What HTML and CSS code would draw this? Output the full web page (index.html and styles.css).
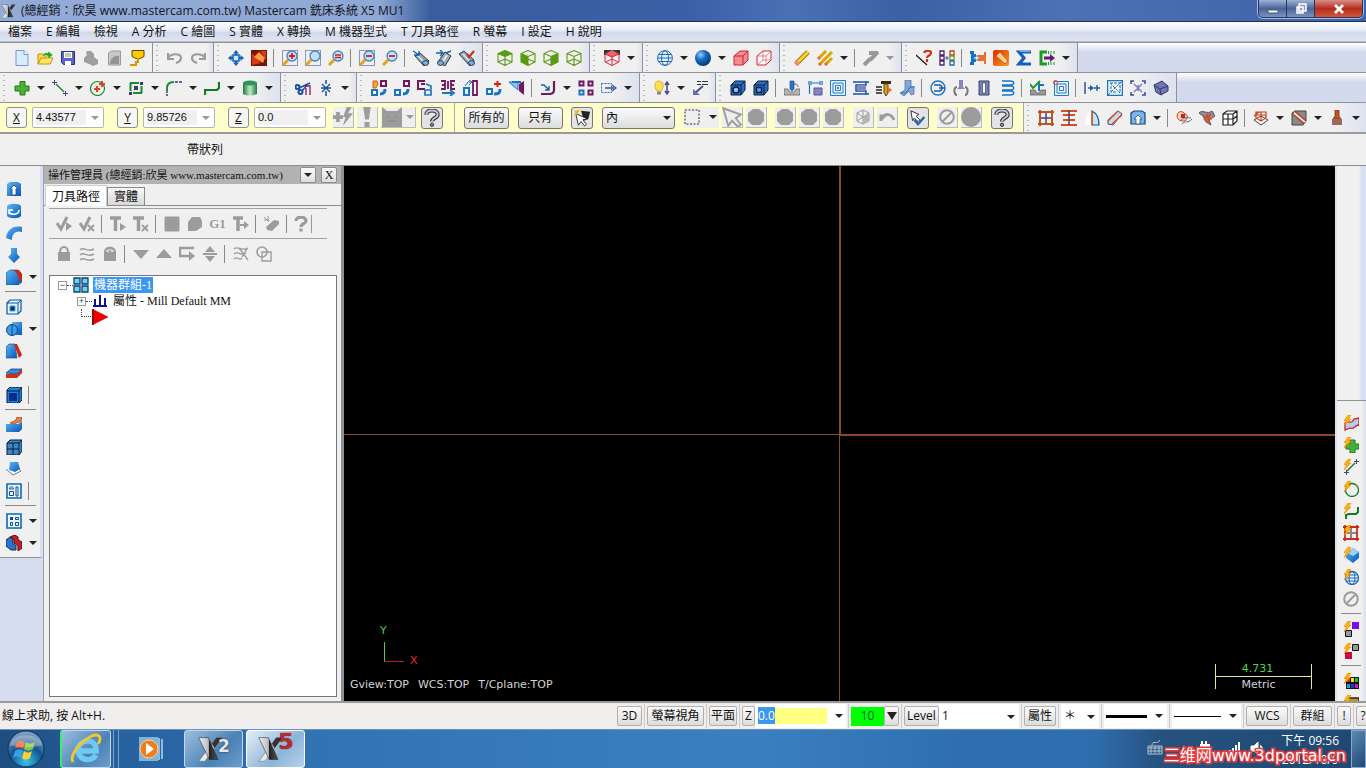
FILE: index.html
```html
<!DOCTYPE html>
<html lang="zh-Hant">
<head>
<meta charset="utf-8">
<title>Mastercam 銑床系統 X5 MU1</title>
<link rel="stylesheet" href="styles.css">
</head>
<body>
<svg class="sprite" aria-hidden="true">
<defs>
<linearGradient id="gBlue" x1="0" y1="0" x2="1" y2="1"><stop offset="0" stop-color="#5db8f5"/><stop offset="1" stop-color="#0755b8"/></linearGradient>
<linearGradient id="gGreen" x1="0" x2="1"><stop offset="0" stop-color="#1d7a3c"/><stop offset=".5" stop-color="#c2e8cb"/><stop offset="1" stop-color="#1d7a3c"/></linearGradient>
<radialGradient id="gBall" cx=".35" cy=".3" r=".8"><stop offset="0" stop-color="#8fd0ff"/><stop offset=".4" stop-color="#1a6cc0"/><stop offset="1" stop-color="#032f66"/></radialGradient>
<linearGradient id="gFire" x1="0" y1="0" x2="1" y2="1"><stop offset="0" stop-color="#e02a00"/><stop offset="1" stop-color="#ff9a20"/></linearGradient>
<linearGradient id="gSteel" x1="0" y1="0" x2="1" y2="0"><stop offset="0" stop-color="#f4f4f4"/><stop offset=".5" stop-color="#b8bcc2"/><stop offset=".55" stop-color="#222"/><stop offset="1" stop-color="#555"/></linearGradient>
<radialGradient id="gOrb" cx=".5" cy=".85" r=".9"><stop offset="0" stop-color="#37c3ef"/><stop offset=".5" stop-color="#14548f"/><stop offset="1" stop-color="#9db9d4"/></radialGradient>
<path id="bolt" d="M5 0h3L5.500 4H8L1 11l2.500-5.500H1z" fill="#ffb400" stroke="#e87a00" stroke-width=".5"/>
<g id="lens"><path d="M1 15l5-5" stroke="#e8a016" stroke-width="3"/><circle cx="10" cy="6" r="5" fill="#bfe2fb" stroke="#4a7fb5" stroke-width="1.300"/></g>
<path id="marq" d="M.5.5h15v15H.5z" stroke="#223a8c" stroke-dasharray="1 1"/>
<g id="cubeLines" stroke="#5b9a12" stroke-width="1.100"><path d="M8 .5l7 3v8.500l-7 3.500L1 12V3.500zM1 3.500L8 6.500l7-3M8 6.500v9M1 12l7-3 7 3"/></g>
<path id="disc" d="M5 0h6l5 4v8l-4 4H4l-4-4V4z" fill="#9c9c9c"/>
</defs>
<symbol id="new" viewBox="0 0 16 16"><path d="M2 .5h8l4 4v11H2z" fill="#d7ecff" stroke="#6f9bd0"/><path d="M10 .5v4h4" fill="#fff" stroke="#6f9bd0"/></symbol>
<symbol id="open" viewBox="0 0 16 16"><path d="M1 14V4h5l1 2h6v3" fill="#ffd84a" stroke="#c49000"/><path d="M1 14l3-6h12l-3 6z" fill="#ffe768" stroke="#c49000"/><path d="M5 7c1-4 4-5 6-4V1l5 4-5 4V6C8 5 7 6 5 7z" fill="#28a428" stroke="#fff" stroke-width=".4"/></symbol>
<symbol id="save" viewBox="0 0 16 16"><path d="M1.500 1.500h13v13h-11l-2-2z" fill="#5a64c8" stroke="#2a2f7c"/><path d="M4 2h8v6H4zM5 11h6v4H5z" fill="#fff"/><path d="M5 4h6M5 6h6" stroke="#888"/></symbol>
<symbol id="print" viewBox="0 0 16 16"><path d="M4 1h4l3 3v3l4 3v4l-5 2-4-2-5-2v-4l3-3-1-2z" fill="#9f9f9f"/></symbol>
<symbol id="prev" viewBox="0 0 16 16"><path d="M2.500 15V3l3-2h9v14z" fill="#c8c8c8" stroke="#9a9a9a"/><path d="M4 14c0-6 5-9 9-8v8z" fill="#949494"/></symbol>
<symbol id="cup" viewBox="0 0 16 16"><path d="M3 .5h12v6l-4 2H7l-4-2z" fill="#ffc800" stroke="#5a4a00"/><path d="M9 8v4H7v3H1" stroke="#d59a00" stroke-width="2"/></symbol>
<symbol id="undo" viewBox="0 0 16 16"><path d="M1 3v6h6M1 8c3-5 13-5 13 0 0 3-2 4-5 5" stroke="#9b9b9b" stroke-width="2.200"/></symbol>
<symbol id="redo" viewBox="0 0 16 16"><path d="M15 3v6H9M15 8C12 3 2 3 2 8c0 3 2 4 5 5" stroke="#9b9b9b" stroke-width="2.200"/></symbol>
<symbol id="fit" viewBox="0 0 16 16"><path d="M8 0l3 3.500H5zM8 16l3-3.500H5zM0 8l3.500 3V5zM16 8l-3.500 3V5z" fill="#1560b8"/><path d="M5 5h6v6H5z" fill="#cfe6fb" stroke="#1560b8" stroke-width="1.500"/><path d="M8 3v2M8 11v2M3 8h2M11 8h2" stroke="#1560b8" stroke-width="2"/></symbol>
<symbol id="repaint" viewBox="0 0 16 16"><path d="M0 0h16v16H0z" fill="#7a1405"/><path d="M1 15V3l9 10zM9 1h6v8z" fill="#d93a12"/><path d="M3 7l5-5 6 6-2 5z" fill="#ff9c45"/></symbol>
<symbol id="zwin" viewBox="0 0 16 16"><use href="#marq"/><use href="#lens"/><path d="M10 3v6M7 6h6" stroke="#d31d1d" stroke-width="1.800"/></symbol>
<symbol id="ztar" viewBox="0 0 16 16"><use href="#marq"/><use href="#lens"/></symbol>
<symbol id="zeq" viewBox="0 0 16 16"><use href="#lens"/><path d="M7 5h6M7 7.500h6" stroke="#d31d1d" stroke-width="1.500"/></symbol>
<symbol id="zoutw" viewBox="0 0 16 16"><use href="#marq"/><use href="#lens"/><path d="M7 6h6" stroke="#d31d1d" stroke-width="1.800"/></symbol>
<symbol id="zout" viewBox="0 0 16 16"><use href="#lens"/><path d="M7 6h6" stroke="#d31d1d" stroke-width="1.800"/></symbol>
<symbol id="scopeA" viewBox="0 0 16 16"><path d="M2 6l5-3 9 8-5 5z" fill="#8fa3b8" stroke="#2c3a48"/><path d="M5 6l7 7" stroke="#dfe8f0" stroke-width="1.500"/><ellipse cx="12.500" cy="13" rx="3" ry="2.400" fill="#7ab0e0" stroke="#2c3a48"/><path d="M0 1l6 4M1 5h5V1" stroke="#1560b8" stroke-width="1.400"/></symbol>
<symbol id="scopeB" viewBox="0 0 16 16"><path d="M9 2l6 4-6 10-7-4z" fill="#9aaab9" stroke="#2c3a48"/><path d="M11 5l-5 8" stroke="#e6edf3" stroke-width="2"/><ellipse cx="4.500" cy="13" rx="3" ry="2.400" fill="#7ab0e0" stroke="#2c3a48"/><path d="M0 3h7M4 0l3 3-3 3M10 3l5-2" stroke="#1560b8" stroke-width="1.400"/></symbol>
<symbol id="scopeC" viewBox="0 0 16 16"><path d="M0 4l5-3 10 9-4 6z" fill="#8fa3b8" stroke="#2c3a48"/><path d="M4 4l7 8" stroke="#dfe8f0" stroke-width="1.500"/><ellipse cx="12.500" cy="13" rx="3" ry="2.400" fill="#7ab0e0" stroke="#2c3a48"/><path d="M8 4l2 3 5-6" stroke="#d02a1a" stroke-width="2"/></symbol>
<symbol id="vTop" viewBox="0 0 16 16"><path d="M1 3.500l7-3 7 3-7 3z" fill="#5b9a12"/><use href="#cubeLines"/></symbol>
<symbol id="vFront" viewBox="0 0 16 16"><path d="M1 3.500l7 3v9L1 12z" fill="#5b9a12"/><use href="#cubeLines"/></symbol>
<symbol id="vRight" viewBox="0 0 16 16"><path d="M15 3.500l-7 3v9l7-3.500z" fill="#5b9a12"/><use href="#cubeLines"/></symbol>
<symbol id="vIso" viewBox="0 0 16 16"><use href="#cubeLines"/></symbol>
<symbol id="vRed" viewBox="0 0 16 16"><path d="M0 0h16v5H0z" fill="#333"/><path d="M1 4l7-4 7 4-7 3z" fill="#f0626a"/><path d="M1 4v8l7 3.500 7-3.500V4L8 7zM8 7v8M2 12l6-3 6 3" stroke="#d3263a"/></symbol>
<symbol id="globe" viewBox="0 0 16 16"><circle cx="8" cy="8" r="7.400" fill="#e8f4ff" stroke="#1d68ad"/><ellipse cx="8" cy="8" rx="3.500" ry="7.200" stroke="#1d68ad"/><path d="M1 8h14M2 4.500h12M2 11.500h12" stroke="#1d68ad"/></symbol>
<symbol id="ball" viewBox="0 0 16 16"><circle cx="8" cy="8" r="8" fill="url(#gBall)"/></symbol>
<symbol id="boxR" viewBox="0 0 16 16"><path d="M1 6l6-5h8v9l-5 5H1z" fill="#f58a92" stroke="#cf2232"/><path d="M1 6h9v9M10 6l5-5" stroke="#cf2232"/></symbol>
<symbol id="boxW" viewBox="0 0 16 16"><path d="M1 6l6-5h8v9l-5 5H1z" fill="#fff" stroke="#cf2232"/><path d="M1 6h9v9M10 6l5-5M7 1v9L1 15M7 10h8" stroke="#e0606a" stroke-width=".8"/></symbol>
<symbol id="eras" viewBox="0 0 16 16"><path d="M2 14L14 2" stroke="#a37a00" stroke-width="5"/><path d="M4 12L14.500 1.500" stroke="#f8cf2c" stroke-width="3"/><path d="M1.500 14.500l3-3" stroke="#ea8c80" stroke-width="4"/></symbol>
<symbol id="eras2" viewBox="0 0 16 16"><path d="M1 9l8-8M2 15L15 2M8 15l7-7" stroke="#d8a800" stroke-width="3"/><path d="M1 9l2-2M2 15l2-2M8 15l2-2" stroke="#ea6c60" stroke-width="3"/></symbol>
<symbol id="undel" viewBox="0 0 16 16"><path d="M1 15l6-6M6 3h9M7 10l8-8" stroke="#999" stroke-width="4"/></symbol>
<symbol id="anq" viewBox="0 0 16 16"><path d="M0 5l11 10" stroke="#222" stroke-width="1.400"/><path d="M8 3c1-3 7-3 7 0 0 3-4 2-4 5M11 9v3" stroke="#cf3212" stroke-width="2.200"/></symbol>
<symbol id="chain" viewBox="0 0 16 16"><path d="M1 1h4v4H1zM1 6h4v4H1zM1 11h4v4H1z" fill="#fff" stroke="#54206e" stroke-width="1.300"/><path d="M11 1h4v4h-4z" fill="#fff" stroke="#c83a1c" stroke-width="1.300"/><path d="M11 6h4v4h-4z" fill="#fff" stroke="#6a9c12" stroke-width="1.300"/><path d="M11 11h4v4h-4z" fill="#fff" stroke="#2368b4" stroke-width="1.300"/><path d="M6 8h4M8 6v4" stroke="#2368b4"/></symbol>
<symbol id="gear" viewBox="0 0 16 16"><path d="M0 1h4v3h2v3H4v2h2v3H4v3H0v-3h1V4H0z" fill="#1570c8"/><circle cx="7" cy="8" r="2" stroke="#4a9ae0"/><path d="M15 2v12M9 6h4v4H9l2-2z" fill="#ef6c2e" stroke="#ef6c2e" stroke-width="2"/></symbol>
<symbol id="brush" viewBox="0 0 16 16"><rect width="16" height="16" rx="2" fill="url(#gFire)"/><path d="M3 6l4-4 8 9-3 3z" fill="#ffd08a" stroke="#a5490a" stroke-width=".7"/></symbol>
<symbol id="sigma" viewBox="0 0 16 16"><path d="M15 2H3l5 6-5 6h12" stroke="#1560b8" stroke-width="3.200"/><path d="M14 1.500H4" stroke="#6eb2ef"/></symbol>
<symbol id="nc" viewBox="0 0 16 16"><path d="M8 2H2v12h6" stroke="#1d9c2a" stroke-width="3"/><path d="M9.500 1v3M12 1v3M15 1v3M9.500 12v3M12 12v3M15 12v3" stroke="#1d9c2a"/><path d="M5 8h7" stroke="#6a1a72" stroke-width="3"/><path d="M11 4l5 4-5 4z" fill="#6a1a72"/></symbol>

<symbol id="plus" viewBox="0 0 16 16"><path d="M6 1.500h5V6h4v5h-4v4H6v-4H1V6h5z" fill="#4fae36" stroke="#1f7a1c"/></symbol>
<symbol id="line" viewBox="0 0 16 16"><path d="M4 4l8 8" stroke="#1b8a2a" stroke-width="1.500"/><path d="M0 2.500h5M2.500 0v5M11 13.500h5M13.500 11v5" stroke="#44447c"/></symbol>
<symbol id="arc" viewBox="0 0 16 16"><circle cx="7.500" cy="8.500" r="7" stroke="#1b8a2a" stroke-width="1.200"/><path d="M4 9h6M7 6v6M9 4h6M12 1v6" stroke="#e0421c" stroke-width="2"/></symbol>
<symbol id="rect" viewBox="0 0 16 16"><path d="M2 3h12M2 13h12M2.500 3v10M13.500 3v10" stroke="#1b8a2a" stroke-width="2"/><path d="M11 1h5v5h-5zM0 11h5v5H0z" fill="#efefef"/><path d="M6 6h4v4H6zM12 2h3v3h-3zM1 12h3v3H1z" fill="#3a3a70"/></symbol>
<symbol id="fillet" viewBox="0 0 16 16"><path d="M1 10V8c0-4 3-6 7-6" stroke="#1b8a2a" stroke-width="2"/><path d="M9 2h7M1 10v6" stroke="#3a3a70" stroke-width="1.500" stroke-dasharray="3 1"/></symbol>
<symbol id="spline" viewBox="0 0 16 16"><path d="M1 15v-5h12l2-2V2" stroke="#137a24" stroke-width="2.200"/></symbol>
<symbol id="cyl" viewBox="0 0 16 16"><path d="M1 3v11c4 2 10 2 14 0V3z" fill="url(#gGreen)"/><ellipse cx="8" cy="3" rx="7" ry="2.400" fill="#2f9457"/></symbol>
<symbol id="trim" viewBox="0 0 16 16"><circle cx="2.500" cy="7" r="2" stroke="#174f9c" stroke-width="2"/><circle cx="5.500" cy="12" r="2" stroke="#174f9c" stroke-width="2"/><path d="M4 8l11-5M7 11l5-6" stroke="#174f9c" stroke-width="1.400"/><path d="M10 6h5v9M11 8v7" stroke="#7a1f66" stroke-width="1.300"/></symbol>
<symbol id="brk" viewBox="0 0 16 16"><path d="M8 0v4M8 11v5" stroke="#174f9c" stroke-width="1.500"/><path d="M4 4l8 8M12 4l-8 8M3 8h10" stroke="#174f9c" stroke-width="1.300"/></symbol>
<symbol id="xf1" viewBox="0 0 16 16"><path d="M2 1h4l1 3-2 4H2z" fill="#f4a42b" stroke="#d0641b"/><path d="M10 1h5v5h-5z" fill="#fff" stroke="#72165f" stroke-width="2"/><path d="M1 10h5v5H1z" fill="#fff" stroke="#1a74c4" stroke-width="2"/><path d="M9 14c4 0 5-2 5-5" stroke="#1a74c4" stroke-width="3"/></symbol>
<symbol id="xf2" viewBox="0 0 16 16"><path d="M10 1h5v5h-5z" fill="#fff" stroke="#72165f" stroke-width="2"/><path d="M1 10h5v5H1z" fill="#fff" stroke="#1a74c4" stroke-width="2"/><path d="M9 14c4 0 5-2 5-5" stroke="#1a74c4" stroke-width="3"/></symbol>
<symbol id="xf3" viewBox="0 0 16 16"><path d="M8 1H1v8h7M4 4h4" stroke="#72165f" stroke-width="2"/><path d="M9 4l5 2v3M8 10v5h6v-5z" stroke="#1a74c4" stroke-width="1.700"/></symbol>
<symbol id="xf4" viewBox="0 0 16 16"><path d="M1 1h4v8H1M15 1h-4v8h4M8 1v8M2 5h3M11 5h3" stroke="#72165f" stroke-width="1.800"/><path d="M2 13h10M10 10l4 3-4 3" stroke="#1a74c4" stroke-width="1.800"/></symbol>
<symbol id="xf5" viewBox="0 0 16 16"><path d="M1 8h5v7H1z" stroke="#1a74c4" stroke-width="2"/><path d="M2 6l3-4h4M6 0l3 2-3 3" stroke="#1a74c4"/><path d="M10 1h4v14h-4z" fill="#fff" stroke="#72165f" stroke-width="1.800"/></symbol>
<symbol id="xf6" viewBox="0 0 16 16"><path d="M1 9h5v5H1z" fill="#fff" stroke="#1a74c4" stroke-width="2"/><path d="M8 14c5 0 6-1 6-5" stroke="#1a74c4" stroke-width="3"/><path d="M8 4h7M11.500 1v6" stroke="#d8201c" stroke-width="2"/></symbol>
<symbol id="xf7" viewBox="0 0 16 16"><path d="M0 2h9v8z" fill="#8fc4ee" stroke="#1a74c4"/><path d="M10 4l5-3v14l-5-4z" fill="#72165f"/><path d="M3 2h9" stroke="#1a74c4" stroke-width="2"/></symbol>
<symbol id="xf8" viewBox="0 0 16 16"><path d="M14 1v9c0 3-2 4-5 4H1" stroke="#72165f" stroke-width="2.200"/><path d="M1 5h3l5 5M9 6v4H5" stroke="#1a5ca8" stroke-width="1.400"/></symbol>
<symbol id="xf9" viewBox="0 0 16 16"><path d="M1.500 1.500h4v4h-4zM10.500 1.500h4v4h-4zM10.500 10.500h4v4h-4z" stroke="#72165f" stroke-width="2"/><path d="M1.500 10.500h4v4h-4z" stroke="#1a74c4" stroke-width="2"/></symbol>
<symbol id="xf10" viewBox="0 0 16 16"><path d="M.5 3.500h10v9H.5z" stroke="#1a74c4" stroke-dasharray="2 1"/><path d="M4 8h9M11 5l4 3-4 3" stroke="#3a4a9c" stroke-width="1.300"/></symbol>
<symbol id="bulb" viewBox="0 0 16 16"><path d="M3 11C-1 6 1 1 5 1s6 5 2 10z" fill="#ffe04a" stroke="#d9b23a"/><path d="M3 13h4" stroke="#888" stroke-width="3"/><path d="M13 2v12M11 5l2-3 2 3M11 11l2 3 2-3" stroke="#4a4a92" stroke-width="1.500"/></symbol>
<symbol id="note" viewBox="0 0 16 16"><path d="M5 1.500h4M10 1.500h6M5 4.500h4M10 4.500h6" stroke="#333"/><path d="M11 6l-8 7" stroke="#4a4a92" stroke-width="2"/><path d="M1 9v6h7z" fill="#6a6ab2"/></symbol>
<symbol id="blk1" viewBox="0 0 16 16"><path d="M1 5l4-4h10v9l-4 5H1z" fill="#2c6fc0" stroke="#0a1c40"/><path d="M1 5h10v10M11 5l4-4" stroke="#0a1c40"/><circle cx="6" cy="10" r="3" fill="#8fc4f4" stroke="#0a1c40" stroke-width="1.500"/></symbol>
<symbol id="blk2" viewBox="0 0 16 16"><path d="M1 5l4-4h10v9l-4 5H1z" fill="#2c6fc0" stroke="#0a1c40"/><path d="M1 5h10v10M11 5l4-4" stroke="#0a1c40"/><path d="M3.500 7.500h5v5h-5z" fill="#5aa2e6" stroke="#0a1c40" stroke-width="1.500"/></symbol>
<symbol id="t1" viewBox="0 0 16 16"><path d="M0 15V9h4l2 3h4l2-3h4v6z" fill="#b4b4b4" stroke="#555" stroke-width=".7"/><path d="M6 1h4v8l-2 2-2-2z" fill="#2a78c8" stroke="#123f78" stroke-width=".6"/><path d="M10 4c4 0 4 2 4 3" stroke="#1a5ca8"/></symbol>
<symbol id="t2" viewBox="0 0 16 16"><path d="M3 3h12M2.500 3v11" stroke="#1a74c4" stroke-width="1.200"/><path d="M1 1h4v4H1zM12 1h4v4h-4z" fill="#6aa6d8"/><path d="M7 8h8v7H7z" fill="#8585c4" stroke="#54549a"/></symbol>
<symbol id="t3" viewBox="0 0 16 16"><path d="M.5.5h15v15H.5zM3 3h10v10H3zM5.500 5.500h5v5h-5z" stroke="#1a80cc"/><path d="M7 7h2v2H7z" fill="#1a80cc"/></symbol>
<symbol id="t4" viewBox="0 0 16 16"><path d="M0 2h16M0 14h16M13 2v3H3v6h10v3" stroke="#15569c" stroke-width="1.500"/><path d="M4 5h9v6H4z" fill="#8585c4"/></symbol>
<symbol id="t5" viewBox="0 0 16 16"><path d="M5 1h10v3H5z" fill="#3a2a10"/><path d="M8 4h4v9l-2 3-2-3z" fill="#d0a020" stroke="#604a10"/><path d="M0 7h6M0 10h6M0 13h6" stroke="#222" stroke-width="1.400"/><path d="M12 7l4 3-4 3z" fill="#ef6c20"/></symbol>
<symbol id="t6" viewBox="0 0 16 16"><path d="M6 0h6v6l3 2v6l-3 1-2-4-5 5-4-3 5-3z" fill="#8aa6d8" stroke="#54649a" stroke-width=".7"/><path d="M2 13h5l4-6h5" stroke="#3a88d0" stroke-width="1.300"/></symbol>
<symbol id="u1" viewBox="0 0 16 16"><circle cx="8" cy="8" r="7" stroke="#1a74c4" stroke-width="1.400"/><path d="M15 8H9M4 5h5c4 0 4 6 0 6H4" stroke="#1a5ca8" stroke-width="1.400"/></symbol>
<symbol id="u2" viewBox="0 0 16 16"><path d="M6 0h4v7l2 2H4l2-2z" fill="#8585c4"/><path d="M4 7c-4 0-3 8 0 8M12 7c4 0 3 8 0 8" stroke="#777" stroke-width="2"/></symbol>
<symbol id="u3" viewBox="0 0 16 16"><path d="M3 1h10v14H3z" fill="#7680b4" stroke="#3a4470"/><path d="M6.500 3h3v10h-3z" fill="#fff" stroke="#3a4470" stroke-width=".7"/></symbol>
<symbol id="u4" viewBox="0 0 16 16"><path d="M3 1h8c5 0 5 4 0 4H3M3 6h8c5 0 5 4 0 4H3M3 11h8c5 0 5 4 0 4H3" stroke="#1a74c4" stroke-width="1.400"/></symbol>
<symbol id="w1" viewBox="0 0 16 16"><path d="M0 15v-5h5l2 3h2l2-3h5v5z" fill="#999" stroke="#555" stroke-width=".7"/><path d="M9 2v9M9 5h5" stroke="#1a74c4" stroke-width="2"/><path d="M0 4l3 4 7-7" stroke="#1b9a2a" stroke-width="2"/></symbol>
<symbol id="w2" viewBox="0 0 16 16"><path d="M1.500 1.500h14v14h-14zM4 4h9v9H4zM6.500 6.500h4v4h-4z" stroke="#1a80cc"/><circle cx="2.500" cy="2.500" r="2" stroke="#d8302c"/></symbol>
<symbol id="y1" viewBox="0 0 16 16"><path d="M0 2h2v12H0z" fill="#6a78b8"/><path d="M4 8h4M10 8h6M13 5v6" stroke="#1a5ca8" stroke-width="1.400"/><path d="M6 5l4 3-4 3z" fill="#1a5ca8"/></symbol>
<symbol id="y2" viewBox="0 0 16 16"><path d="M.5.500h15v15H.5z" stroke="#1a74c4" stroke-width="1.400"/><path d="M3 3h10v10M1 15L15 1M3 3l10 10M4 6v6h6" stroke="#1a74c4" stroke-dasharray="3 1"/></symbol>
<symbol id="y3" viewBox="0 0 16 16"><path d="M1 4V1h3M12 1h3v3M15 12v3h-3M4 15H1v-3" stroke="#3a4a9c" stroke-width="1.500"/><path d="M4 4l8 8M12 4l-8 8M8 5v6" stroke="#7a84c4" stroke-width="1.500"/></symbol>
<symbol id="y4" viewBox="0 0 16 16"><path d="M1 5l8-4 6 5v5l-7 4-5-3z" fill="#6e74b4" stroke="#363a6a"/><path d="M1 5l6 4 8-3M7 9l1 6" stroke="#363a6a"/></symbol>

<symbol id="add" viewBox="0 0 16 16"><path d="M0 8h8M4 4v8" stroke="#9c9c9c" stroke-width="3"/><path d="M11 0h4l-3 5h4l-8 10 2-7H8z" fill="#9c9c9c"/></symbol>
<symbol id="bang" viewBox="0 0 16 16"><path d="M5 0h6L9.500 10h-3zM6 12h4v4H6z" fill="#9c9c9c"/></symbol>
<symbol id="cat" viewBox="0 0 20 20"><path d="M0 0l5 4h10l5-4v20H0z" fill="#9c9c9c"/><path d="M6 9v2M14 9v2M6 14h8" stroke="#858585"/></symbol>
<symbol id="help" viewBox="0 0 16 16"><path d="M3 5c0-5 10-5 10 0 0 3-5 3-5 6" stroke="#333" stroke-width="3.600"/><path d="M3 5c0-5 10-5 10 0 0 3-5 3-5 6" stroke="#c4c8da" stroke-width="1.800"/><circle cx="8" cy="14" r="1.500" fill="#889" stroke="#333" stroke-width=".8"/></symbol>
<symbol id="pick2" viewBox="0 0 20 20"><path d="M9 2l10 1-2 8-5 2z" fill="#222"/><path d="M3 5l3 13 3-4 4 5 2-2-4-5 5-1z" fill="#fff" stroke="#222"/><path d="M2 3l5-1M2 7l4-5" stroke="#f0b800" stroke-width="2"/></symbol>
<symbol id="ants" viewBox="0 0 16 16"><path d="M1 1h14v14H1z" stroke="#333" stroke-dasharray="2 1.500"/></symbol>
<symbol id="garrow" viewBox="0 0 16 16"><path d="M1 1l14 5-4 3 4 5-2 2-5-5-3 4z" fill="#eee" stroke="#9c9c9c" stroke-width="1.500"/></symbol>
<symbol id="gdisc" viewBox="0 0 16 16"><use href="#disc"/></symbol>
<symbol id="ghalf" viewBox="0 0 16 16"><path d="M8 1l6 3v8l-6 3-6-3V4zM8 1v14M2 4l6 4 6-4M2 12l6-4 6 4" stroke="#9c9c9c"/><path d="M8 8l6-4v8l-6 3z" fill="#b5b5b5"/></symbol>
<symbol id="gback" viewBox="0 0 16 16"><path d="M2 12V7h5M3 10c3-6 9-6 12 1" stroke="#9c9c9c" stroke-width="3"/></symbol>
<symbol id="verify" viewBox="0 0 20 20"><path d="M6 12l4 5 7-8" stroke="#2a64b0" stroke-width="2.600"/><path d="M2 2l9 4-3 2 4 4-2 2-4-4-2 3z" fill="#fff" stroke="#222"/></symbol>
<symbol id="no" viewBox="0 0 16 16"><circle cx="8" cy="8" r="6.800" stroke="#9c9c9c" stroke-width="2"/><path d="M3 13L13 3" stroke="#9c9c9c" stroke-width="2"/></symbol>
<symbol id="gball" viewBox="0 0 20 20"><circle cx="10" cy="10" r="10" fill="#9c9c9c"/></symbol>

<symbol id="s1" viewBox="0 0 16 16"><path d="M2 0v16M14 0v16M0 2h16M0 14h16" stroke="#c8501c" stroke-width="2"/><path d="M8 3v10M3 8h10" stroke="#44447c" stroke-width="1.500"/></symbol>
<symbol id="s2" viewBox="0 0 16 16"><path d="M0 1h16M2 5h12M2 10h12M0 15h16" stroke="#d8501c" stroke-width="1.800"/><path d="M8 0v15" stroke="#44447c" stroke-width="1.500"/></symbol>
<symbol id="s3" viewBox="0 0 16 16"><path d="M8 1c4 2 7 7 7 14H8z" fill="#c8e4f8" stroke="#15569c" stroke-width="1.200"/><path d="M1 15C1 7 4 2 8 1v14z" fill="#fff"/><path d="M8 1v14" stroke="#d8501c" stroke-width="1.600"/></symbol>
<symbol id="s4" viewBox="0 0 16 16"><path d="M1 10L11 1l4 3-9 11-5-1z" fill="#c8d8f0" stroke="#44447c"/><path d="M1 11L11 1M5 14l10-9" stroke="#d8501c" stroke-width="1.400"/></symbol>
<symbol id="s5" viewBox="0 0 16 16"><path d="M1 3l3-2h8l3 2v11H1z" fill="#7ab4e8" stroke="#15467c" stroke-width="1.200"/><path d="M8 5l4 4h-2v5H6V9H4z" fill="#fff" stroke="#15467c" stroke-width=".7"/></symbol>
<symbol id="s6" viewBox="0 0 16 16"><path d="M1 6c1-6 6-5 8-2 4 1 2 5 0 7-4 0-7 0-8-5z" stroke="#d8401c" fill="#f6d0b8"/><path d="M6 14c3-4 6 0 10-5M4 11c3-3 7-4 11-3" stroke="#5c6c94"/><path d="M5 4h4v4H5z" fill="#c02818"/></symbol>
<symbol id="s7" viewBox="0 0 16 16"><path d="M0 3c4-4 8 2 13-2l3 5-6 4 2 5-5-3-3-6z" fill="#8e8e96" stroke="#555"/><path d="M5 6l8 3M5 10l7-6M8 4l2 10" stroke="#d84c28" stroke-width="1.800"/></symbol>
<symbol id="s8" viewBox="0 0 16 16"><path d="M1 4l4-3h10v10l-4 4H1zM1 4h10v11M11 4l4-3M6 4v11M1 9h10M11 9l4-3" stroke="#222" stroke-width="1.200" fill="#fff"/></symbol>
<symbol id="m1" viewBox="0 0 16 16"><path d="M1 10l7 5 7-5-7-4z" fill="#fff" stroke="#444"/><path d="M3 2h10v6l-5 3-5-3zM1 6l5-4M8 2v9M3 5h10" stroke="#c8401c" stroke-width="1.200"/></symbol>
<symbol id="m2" viewBox="0 0 16 16"><path d="M1 3l3-2h11v10l-3 4H1z" fill="#8a8a8a" stroke="#444"/><path d="M1 3l12 11M4 1l11 10" stroke="#c8401c" stroke-width="1.500"/><path d="M3 3l11 9" stroke="#fff" stroke-width="1.500"/></symbol>
<symbol id="m3" viewBox="0 0 16 16"><path d="M6 0h4v6l2 3H4l2-3z" fill="#c8501c" stroke="#7a2a0c" stroke-width=".7"/><path d="M3 9h10v6H3z" fill="#777"/><path d="M3 11h10M3 14h10" stroke="#e0502a"/></symbol>

<symbol id="l1" viewBox="0 0 16 16"><path d="M1 3l3-2h8l3 2v12H1z" fill="url(#gBlue)"/><path d="M8 4l4 4h-2v6H6V8H4z" fill="#fff" stroke="#0a3f7c" stroke-width=".8"/></symbol>
<symbol id="l2" viewBox="0 0 16 16"><path d="M1 3c2-3 12-3 14 0v10c-2 3-12 3-14 0z" fill="url(#gBlue)"/><path d="M3 8c1 5 10 4 10-1M3 11V7h4" stroke="#fff" stroke-width="1.600"/></symbol>
<symbol id="l3" viewBox="0 0 16 16"><path d="M0 13C1 5 7 0 16 2v5C9 5 6 9 6 15z" fill="url(#gBlue)"/></symbol>
<symbol id="l4" viewBox="0 0 16 16"><path d="M5 1h6v6l3 3-6 6-6-6 3-3z" fill="url(#gBlue)"/></symbol>
<symbol id="l5" viewBox="0 0 16 16"><path d="M0 4l4-3h8l4 5v7l-4 3H0z" fill="url(#gBlue)" stroke="#0a4a8c" stroke-width=".6"/><path d="M7 1h6l3 4v6l-3 2c0-5-1-9-6-12z" fill="#c8281a"/></symbol>
<symbol id="l6" viewBox="0 0 16 16"><path d="M1 4l3-3h11v11l-3 3H1z" fill="#e4f2fc" stroke="#0c559c" stroke-width="1.200"/><path d="M1 4h11v11M12 4l3-3" stroke="#0c559c"/><path d="M4 7h5v5H4z" fill="#08346c" stroke="#4ca0e0"/></symbol>
<symbol id="l7" viewBox="0 0 16 16"><path d="M6 1h10v13H6z" fill="url(#gBlue)"/><circle cx="6" cy="9" r="5.500" fill="#3e9be6" stroke="#0a4a8c"/><path d="M6 3v12" stroke="#0a4a8c"/></symbol>
<symbol id="l8" viewBox="0 0 16 16"><path d="M0 15V4l3-3h6l2 14z" fill="url(#gBlue)" stroke="#0a4a8c" stroke-width=".6"/><path d="M8 1h3l5 11-3 3z" fill="#c8281a"/></symbol>
<symbol id="l9" viewBox="0 0 16 16"><path d="M0 8l5-4h11l-5 5z" fill="#2f8be0" stroke="#0a3468" stroke-width=".7"/><path d="M0 9h11l5-5v4l-5 5H0z" fill="#c8321e"/></symbol>
<symbol id="l10" viewBox="0 0 16 16"><path d="M1 3l3-3h12v13l-3 3H1z" fill="#1f7fd0" stroke="#041c48"/><path d="M3 6h8v8H3z" fill="#062f88"/><path d="M13 4v12M1 4h12l3-4" stroke="#041c48"/></symbol>
<symbol id="l11" viewBox="0 0 16 16"><path d="M0 7h12l4-3v8l-3 3H0z" fill="url(#gBlue)"/><path d="M4 6l6-3 1-3 5 0-1 4-7 3z" fill="#f08040" stroke="#9a3c10" stroke-width=".7"/></symbol>
<symbol id="l12" viewBox="0 0 16 16"><path d="M1 4l3-3h12v11l-3 4H1z" fill="#3f84c4" stroke="#061c3c"/><path d="M1 4h12v12M7 4v12M1 10h12M13 4l3-3" stroke="#061c3c"/></symbol>
<symbol id="l13" viewBox="0 0 16 16"><path d="M0 8l7 6 8-4-3-3" fill="#fff" stroke="#678"/><path d="M4 1h8l2 7-5 3-6-2z" fill="url(#gBlue)"/></symbol>
<symbol id="l14" viewBox="0 0 16 16"><path d="M1 1h14v14H1z" fill="#eaf5fd" stroke="#0e6ab0" stroke-width="1.600"/><path d="M3.500 6c0-3 4-3 4 0zM3.500 8.500h4v4h-4zM10 4h2v9h-2z" stroke="#0c4f8c"/></symbol>
<symbol id="l15" viewBox="0 0 16 16"><path d="M1 1h14v14H1z" fill="#eaf5fd" stroke="#0e6ab0" stroke-width="1.600"/><path d="M4 4h3v3H4z" fill="#223c94"/><path d="M9.500 4.500h3v2h-3zM4.500 9.500h2v3h-2zM9.500 9.500h3v3h-3z" stroke="#0c4f8c"/></symbol>
<symbol id="l16" viewBox="0 0 16 16"><path d="M0 5l4-3 3 2v5l3 2v4H5l-5-4z" fill="#2b75c8" stroke="#082c5c"/><path d="M4 2l5-2 3 2v3l4 2v6l-4 3v-5L8 8V4z" fill="#c8202a" stroke="#5c0810"/></symbol>

<symbol id="r1" viewBox="0 0 16 16"><path d="M2 15V8c4-4 6 3 9-4l5-1v7c-5 0-4 5-9 3z" fill="#b8cce8" stroke="#c8242c" stroke-width="1.300"/><use href="#bolt"/></symbol>
<symbol id="r2" viewBox="0 0 16 16"><path d="M7 3h5v4h4v5h-4v4H7v-4H3V7h4z" fill="#4cae3a" stroke="#1f7a1c"/><use href="#bolt"/></symbol>
<symbol id="r3" viewBox="0 0 16 16"><path d="M4 12l8-8" stroke="#1b7a2a" stroke-width="1.500"/><path d="M11 2.500h5M13.500 0v5M1 13.500h5M3.500 11v5" stroke="#44447c"/><use href="#bolt"/></symbol>
<symbol id="r4" viewBox="0 0 16 16"><circle cx="9" cy="9" r="6.500" stroke="#1b7a2a" stroke-width="1.300"/><use href="#bolt"/></symbol>
<symbol id="r5" viewBox="0 0 16 16"><path d="M3 16v-4l3-1h7l2-2V4" stroke="#137a24" stroke-width="2"/><use href="#bolt"/></symbol>
<symbol id="r6" viewBox="0 0 16 16"><path d="M2 2h12v12H2zM0 2h16M0 14h16M2 0v16M14 0v16" stroke="#c82c1c" stroke-width="1.800"/><path d="M8 3v10M3 8h10" stroke="#888" stroke-width="2"/><use href="#bolt"/></symbol>
<symbol id="r7" viewBox="0 0 16 16"><path d="M3 5l7-4 6 4v6l-6 5-7-5z" fill="url(#gBlue)"/><path d="M3 5l7 4 6-4-6-4z" fill="#9fd0f6"/><use href="#bolt"/></symbol>
<symbol id="r8" viewBox="0 0 16 16"><circle cx="9" cy="9" r="6.500" fill="#eef7ff" stroke="#1d68ad" stroke-width="1.300"/><ellipse cx="9" cy="9" rx="3" ry="6.500" stroke="#1d68ad"/><path d="M3 9h13M4 6h10M4 12h10" stroke="#1d68ad"/><use href="#bolt"/></symbol>
<symbol id="r9" viewBox="0 0 16 16"><path d="M9 1h7v7H9z" fill="#7a0ce8"/><path d="M2.500 9.500h6v6h-6z" fill="#999" stroke="#111"/><use href="#bolt"/></symbol>
<symbol id="r10" viewBox="0 0 16 16"><path d="M9.500 1.500h6v6h-6z" fill="#999" stroke="#111"/><path d="M2 9h7v7H2z" fill="#c80c3c"/><use href="#bolt"/></symbol>
<symbol id="r11" viewBox="0 0 16 16"><path d="M3 4h13v12H3z" fill="#111"/><path d="M4 5h3v4H4z" fill="#e02020"/><path d="M8 5h3v4H8z" fill="#f0e010"/><path d="M12 5h3v4h-3z" fill="#20c030"/><path d="M4 11h3v4H4z" fill="#10b0c8"/><path d="M8 11h3v4H8z" fill="#2030e0"/><path d="M12 11h3v4h-3z" fill="#c020c0"/><use href="#bolt"/></symbol>
<symbol id="r12" viewBox="0 0 16 16"><path d="M4 3h12v10H4z" fill="#c8960c" stroke="#222" stroke-width="1.500"/><use href="#bolt"/></symbol>

<symbol id="p1" viewBox="0 0 16 16"><path d="M1 7l4 6 6-12" stroke="#9c9c9c" stroke-width="3"/><path d="M10 6l6 4-6 5z" fill="#9c9c9c"/></symbol>
<symbol id="p2" viewBox="0 0 16 16"><path d="M1 7l4 6 6-12" stroke="#9c9c9c" stroke-width="3"/><path d="M9 9l6 6M15 9l-6 6" stroke="#9c9c9c" stroke-width="1.800"/></symbol>
<symbol id="p3" viewBox="0 0 16 16"><path d="M0 2h11M5.500 2v13" stroke="#9c9c9c" stroke-width="3.500"/><path d="M10 7l6 4-6 4z" fill="#9c9c9c"/></symbol>
<symbol id="p4" viewBox="0 0 16 16"><path d="M0 2h11M5.500 2v13" stroke="#9c9c9c" stroke-width="3.500"/><path d="M9 9l6 6M15 9l-6 6" stroke="#9c9c9c" stroke-width="1.800"/></symbol>
<symbol id="p5" viewBox="0 0 16 16"><path d="M1 1h14v14H1z" fill="#9c9c9c" stroke="#9c9c9c"/></symbol>
<symbol id="p6" viewBox="0 0 16 16"><path d="M5 1h8l2 4v6l-6 4H1V6z" fill="#9c9c9c"/></symbol>
<symbol id="p7" viewBox="0 0 16 16"><path d="M0 2h10M5 2v13" stroke="#9c9c9c" stroke-width="3.500"/><path d="M7 8h4V5l5 4-5 4v-3H7z" fill="#9c9c9c"/></symbol>
<symbol id="p8" viewBox="0 0 16 16"><path d="M2 11l8-7 5 1v3l-7 7-5-1z" fill="#9c9c9c"/><path d="M0 1l5 5M4 0v5M0 4h5" stroke="#9c9c9c"/></symbol>
<symbol id="p9" viewBox="0 0 16 16"><path d="M3 5c0-5 10-5 10 0 0 3-5 2-5 6M8 12.500v3" stroke="#9c9c9c" stroke-width="3.200"/></symbol>
<symbol id="q1" viewBox="0 0 16 16"><path d="M2 6h12v9H2z" fill="#9c9c9c"/><path d="M4 7c0-8 8-8 8 0" stroke="#9c9c9c" stroke-width="2"/></symbol>
<symbol id="q2" viewBox="0 0 16 16"><path d="M1 4c4-4 7 3 14-1M1 9c4-4 7 3 14-1M1 14c4-4 7 3 14-1" stroke="#9c9c9c" stroke-width="1.500"/></symbol>
<symbol id="q3" viewBox="0 0 16 16"><path d="M2 15V6c0-7 12-7 12 0v9z" fill="#9c9c9c"/><path d="M5 6c0-3 6-3 6 0M4 4l3 2M12 4L9 6" stroke="#eee"/></symbol>
<symbol id="q4" viewBox="0 0 16 16"><path d="M0 4h16l-8 9z" fill="#9c9c9c"/></symbol>
<symbol id="q5" viewBox="0 0 16 16"><path d="M0 12h16L8 3z" fill="#9c9c9c"/></symbol>
<symbol id="q6" viewBox="0 0 16 16"><path d="M15 2H1v8h10" stroke="#9c9c9c" stroke-width="2.400"/><path d="M10 5l6 5-6 5z" fill="#9c9c9c"/></symbol>
<symbol id="q7" viewBox="0 0 16 16"><path d="M3 6h10L8 0zM3 10h10l-5 6zM1 7h14v2H1z" fill="#9c9c9c"/></symbol>
<symbol id="q8" viewBox="0 0 16 16"><path d="M1 3c4-4 7 3 14-1M1 8c4-4 6 3 12-1M1 13c4-4 5 3 8-1M6 2l9 12M14 3L9 11" stroke="#9c9c9c" stroke-width="1.300"/></symbol>
<symbol id="q9" viewBox="0 0 16 16"><circle cx="6" cy="6" r="5" stroke="#9c9c9c" stroke-width="1.600"/><path d="M6 6h9v9H6z" stroke="#9c9c9c" stroke-width="1.400"/></symbol>
<symbol id="grp" viewBox="0 0 16 16"><path d="M1 1h6v6H1zM9 1h6v6H9zM1 9h6v6H1zM9 9h6v6H9z" fill="#62d8f0" stroke="#103c70" stroke-width="1.300"/></symbol>
<symbol id="prop" viewBox="0 0 16 16"><path d="M1 13h14M3 6v7M8 2v11M13 5v8" stroke="#12128c" stroke-width="2"/></symbol>
<symbol id="flag" viewBox="0 0 16 16"><path d="M0 0l16 8-16 8z" fill="#f40000" stroke="#a01010" stroke-width=".6"/><path d="M1 0v16" stroke="#8c1010" stroke-width="2"/></symbol>
<symbol id="xbig" viewBox="0 0 32 32"><path d="M22 3h7L9 30H2z" fill="#e6e8ea" stroke="#666" stroke-width=".6"/><path d="M2 3h11l11 25H14z" fill="url(#gSteel)" stroke="#222" stroke-width=".6"/><path d="M22 3h7l-9 12-3-5z" fill="#333"/></symbol>
</svg>

<header class="titlebar">
  <svg class="i16"><use href="#xbig"/></svg>
  <h1 class="titletext">(總經銷：欣昊 www.mastercam.com.tw) Mastercam 銑床系統 X5 MU1</h1>
  <div class="winbtns">
    <button class="wb" aria-label="最小化"><svg viewBox="0 0 16 14"><path d="M3 8h10v3H3z" fill="#fff" stroke="#4a5a78"/></svg></button>
    <button class="wb" aria-label="還原"><svg viewBox="0 0 16 14"><path d="M6 2h7v7H6zM4 5h6v6H4z" fill="#8a9cc0" stroke="#fff" stroke-width="1.500"/></svg></button>
    <button class="wb close" aria-label="關閉"><svg viewBox="0 0 16 14"><path d="M4 3l8 8M12 3l-8 8" stroke="#fff" stroke-width="2.800"/></svg></button>
  </div>
</header>

<nav class="menu">
  <button>檔案</button><button>E 編輯</button><button>檢視</button><button>A 分析</button><button>C 繪圖</button><button>S 實體</button><button>X 轉換</button><button>M 機器型式</button><button>T 刀具路徑</button><button>R 螢幕</button><button>I 設定</button><button>H 說明</button>
</nav>

<div class="row">
  <div class="grp first">
    <button aria-label="新檔"><svg><use href="#new"/></svg></button><button aria-label="開啟"><svg><use href="#open"/></svg></button><button aria-label="儲存"><svg><use href="#save"/></svg></button><button aria-label="列印"><svg><use href="#print"/></svg></button><button aria-label="預覽"><svg><use href="#prev"/></svg></button><button aria-label="後處理"><svg><use href="#cup"/></svg></button>
  </div>
  <div class="grp"><button aria-label="復原"><svg><use href="#undo"/></svg></button><button aria-label="重做"><svg><use href="#redo"/></svg></button></div>
  <div class="grp">
    <button aria-label="適度化"><svg><use href="#fit"/></svg></button><button aria-label="重畫"><svg><use href="#repaint"/></svg></button><i class="sep"></i><button aria-label="視窗放大"><svg><use href="#zwin"/></svg></button><button aria-label="目標放大"><svg><use href="#ztar"/></svg></button><button aria-label="回復"><svg><use href="#zeq"/></svg></button><i class="sep"></i><button aria-label="縮小視窗"><svg><use href="#zoutw"/></svg></button><button aria-label="縮小"><svg><use href="#zout"/></svg></button><i class="sep"></i><button aria-label="動態旋轉"><svg><use href="#scopeA"/></svg></button><button aria-label="前一視角"><svg><use href="#scopeB"/></svg></button><button aria-label="指定視角"><svg><use href="#scopeC"/></svg></button>
  </div>
  <div class="grp"><button aria-label="俯視圖"><svg><use href="#vTop"/></svg></button><button aria-label="前視圖"><svg><use href="#vFront"/></svg></button><button aria-label="右視圖"><svg><use href="#vRight"/></svg></button><button aria-label="等角視圖"><svg><use href="#vIso"/></svg></button></div>
  <div class="grp"><button aria-label="構圖面"><svg><use href="#vRed"/></svg></button><button class="dd" aria-label="更多構圖面"></button></div>
  <div class="grp"><button aria-label="線架構"><svg><use href="#globe"/></svg></button><button class="dd" aria-label="更多線架構"></button><button aria-label="著色"><svg><use href="#ball"/></svg></button><button class="dd" aria-label="更多著色"></button><button aria-label="半透明"><svg><use href="#boxR"/></svg></button><button aria-label="背面線架構"><svg><use href="#boxW"/></svg></button></div>
  <div class="grp"><button aria-label="刪除"><svg><use href="#eras"/></svg></button><button aria-label="刪除重複"><svg><use href="#eras2"/></svg></button><button class="dd" aria-label="更多刪除"></button><i class="sep"></i><button aria-label="恢復刪除"><svg><use href="#undel"/></svg></button><button class="dd off" aria-label="更多恢復"></button></div>
  <div class="grp"><button aria-label="分析"><svg><use href="#anq"/></svg></button><button aria-label="分析串連"><svg><use href="#chain"/></svg></button><i class="sep"></i><button aria-label="規劃"><svg><use href="#gear"/></svg></button><button aria-label="清除顏色"><svg><use href="#brush"/></svg></button><button aria-label="統計"><svg><use href="#sigma"/></svg></button><button aria-label="執行程式"><svg><use href="#nc"/></svg></button><button class="dd" aria-label="更多程式"></button></div>
</div>

<div class="row">
  <div class="grp"><button aria-label="點"><svg><use href="#plus"/></svg></button><button class="dd" aria-label="更多點"></button><button aria-label="線"><svg><use href="#line"/></svg></button><button class="dd" aria-label="更多線"></button><button aria-label="圓弧"><svg><use href="#arc"/></svg></button><button class="dd" aria-label="更多圓弧"></button><button aria-label="矩形"><svg><use href="#rect"/></svg></button><button class="dd" aria-label="更多矩形"></button><button aria-label="倒圓角"><svg><use href="#fillet"/></svg></button><button class="dd" aria-label="更多圓角"></button><button aria-label="曲線"><svg><use href="#spline"/></svg></button><button class="dd" aria-label="更多曲線"></button><button aria-label="圓柱"><svg><use href="#cyl"/></svg></button><button class="dd" aria-label="更多實體"></button></div>
  <div class="grp"><button aria-label="修剪"><svg><use href="#trim"/></svg></button><button aria-label="打斷"><svg><use href="#brk"/></svg></button><button class="dd" aria-label="更多打斷"></button></div>
  <div class="grp"><button aria-label="動態轉換"><svg><use href="#xf1"/></svg></button><button aria-label="平移"><svg><use href="#xf2"/></svg></button><button aria-label="3D平移"><svg><use href="#xf3"/></svg></button><button aria-label="鏡射"><svg><use href="#xf4"/></svg></button><button aria-label="旋轉"><svg><use href="#xf5"/></svg></button><button aria-label="比例縮放"><svg><use href="#xf6"/></svg></button><button aria-label="投影"><svg><use href="#xf7"/></svg></button><i class="sep"></i><button aria-label="補正"><svg><use href="#xf8"/></svg></button><button class="dd" aria-label="更多補正"></button><button aria-label="陣列"><svg><use href="#xf9"/></svg></button><button aria-label="拖曳"><svg><use href="#xf10"/></svg></button><button class="dd" aria-label="更多拖曳"></button></div>
  <div class="grp"><button aria-label="尺寸標註"><svg><use href="#bulb"/></svg></button><button class="dd" aria-label="更多標註"></button><button aria-label="註解"><svg><use href="#note"/></svg></button></div>
  <div class="grp"><button aria-label="實體驗證"><svg><use href="#blk1"/></svg></button><button aria-label="實體切削"><svg><use href="#blk2"/></svg></button><i class="sep"></i><button aria-label="外形"><svg><use href="#t1"/></svg></button><button aria-label="鑽孔"><svg><use href="#t2"/></svg></button><button aria-label="挖槽"><svg><use href="#t3"/></svg></button><button aria-label="面銑"><svg><use href="#t4"/></svg></button><button aria-label="雕刻"><svg><use href="#t5"/></svg></button><button aria-label="曲面"><svg><use href="#t6"/></svg></button><i class="sep"></i><button aria-label="全圓"><svg><use href="#u1"/></svg></button><button aria-label="螺旋"><svg><use href="#u2"/></svg></button><button aria-label="鍵槽"><svg><use href="#u3"/></svg></button><button aria-label="螺紋"><svg><use href="#u4"/></svg></button><i class="sep"></i><button aria-label="特徵"><svg><use href="#w1"/></svg></button><button aria-label="高速"><svg><use href="#w2"/></svg></button><i class="sep"></i><button aria-label="點進刀"><svg><use href="#y1"/></svg></button><button aria-label="單向"><svg><use href="#y2"/></svg></button><button aria-label="放射"><svg><use href="#y3"/></svg></button><button aria-label="素材"><svg><use href="#y4"/></svg></button></div>
</div>

<div class="row">
  <div class="yel coord">
    <label class="btn key" for="cx"><u>X</u></label><div class="combo"><input id="cx" value="4.43577"><span class="tri off"></span></div>
    <label class="btn key" for="cy"><u>Y</u></label><div class="combo"><input id="cy" value="9.85726"><span class="tri off"></span></div>
    <label class="btn key" for="cz"><u>Z</u></label><div class="combo"><input id="cz" value="0.0"><span class="tri off"></span></div>
    <div class="cluster"><button class="ib" aria-label="快速點"><svg class="big"><use href="#add"/></svg></button><button class="ib" aria-label="設定"><svg class="big"><use href="#bang"/></svg></button><button class="ib wide" aria-label="自動抓點"><svg class="big"><use href="#cat"/></svg><span class="tri off"></span></button></div>
    <button class="btn sq" aria-label="說明"><svg class="big"><use href="#help"/></svg></button>
  </div>
  <div class="yel pick">
    <button class="btn txt">所有的</button><button class="btn txt">只有</button><button class="btn sq" aria-label="選取切換"><svg class="big"><use href="#pick2"/></svg></button>
    <div class="selwrap inwin"><select class="btn" aria-label="視窗選取"><option>內</option></select><span class="tri"></span></div>
    <div class="cluster"><button class="ib ants" aria-label="窗選"><svg><use href="#ants"/></svg><span class="tri"></span></button><button class="ib" aria-label="選取"><svg class="big"><use href="#garrow"/></svg></button><button class="ib" aria-label="選取實體"><svg><use href="#gdisc"/></svg></button></div>
    <div class="cluster"><button class="ib" aria-label="實體邊界"><svg><use href="#gdisc"/></svg></button><button class="ib" aria-label="實體面"><svg><use href="#gdisc"/></svg></button><button class="ib" aria-label="實體主體"><svg><use href="#gdisc"/></svg></button></div>
    <div class="cluster"><button class="ib" aria-label="背面"><svg><use href="#ghalf"/></svg></button><button class="ib" aria-label="最後選取"><svg><use href="#gback"/></svg></button></div>
    <button class="btn sq" aria-label="驗證選取"><svg class="big"><use href="#verify"/></svg></button>
    <div class="cluster"><button class="ib" aria-label="取消選取"><svg><use href="#no"/></svg></button><button class="ib" aria-label="結束選取"><svg class="big"><use href="#gball"/></svg></button></div>
    <button class="btn sq" aria-label="選取說明"><svg class="big"><use href="#help"/></svg></button>
  </div>
  <div class="grp tail"><button aria-label="直紋曲面"><svg><use href="#s1"/></svg></button><button aria-label="舉升曲面"><svg><use href="#s2"/></svg></button><button aria-label="旋轉曲面"><svg><use href="#s3"/></svg></button><button aria-label="掃描曲面"><svg><use href="#s4"/></svg></button><button aria-label="擠出曲面"><svg><use href="#s5"/></svg></button><button class="dd" aria-label="更多曲面"></button><i class="sep"></i><button aria-label="曲面修剪"><svg><use href="#s6"/></svg></button><button aria-label="曲面延伸"><svg><use href="#s7"/></svg></button><button aria-label="實體產生曲面"><svg><use href="#s8"/></svg></button><i class="sep"></i><button aria-label="曲面粗加工"><svg><use href="#m1"/></svg></button><button class="dd" aria-label="更多粗加工"></button><button aria-label="曲面精加工"><svg><use href="#m2"/></svg></button><button class="dd" aria-label="更多精加工"></button><button aria-label="多軸加工"><svg><use href="#m3"/></svg></button><button class="dd" aria-label="更多多軸"></button></div>
</div>

<div class="ribbon">帶狀列</div>

<main class="main">
  <aside class="left">
    <div class="lbar">
      <div class="v"><button aria-label="實體擠出"><svg><use href="#l1"/></svg></button></div>
      <div class="v"><button aria-label="實體旋轉"><svg><use href="#l2"/></svg></button></div>
      <div class="v"><button aria-label="實體掃描"><svg><use href="#l3"/></svg></button></div>
      <div class="v"><button aria-label="實體舉升"><svg><use href="#l4"/></svg></button></div>
      <div class="v"><button aria-label="實體倒圓角"><svg><use href="#l5"/></svg></button><button class="dd" aria-label="更多倒圓角"></button></div>
      <i class="hsep"></i>
      <div class="v"><button aria-label="薄殼"><svg><use href="#l6"/></svg></button></div>
      <div class="v"><button aria-label="布林運算"><svg><use href="#l7"/></svg></button><button class="dd" aria-label="更多布林"></button></div>
      <div class="v"><button aria-label="牽引面"><svg><use href="#l8"/></svg></button></div>
      <div class="v"><button aria-label="薄片加厚"><svg><use href="#l9"/></svg></button></div>
      <div class="v bar"><button aria-label="移除面"><svg><use href="#l10"/></svg></button></div>
      <i class="hsep"></i>
      <div class="v"><button aria-label="實體修剪"><svg><use href="#l11"/></svg></button></div>
      <div class="v"><button aria-label="曲面轉實體"><svg><use href="#l12"/></svg></button></div>
      <div class="v"><button aria-label="偏移面"><svg><use href="#l13"/></svg></button></div>
      <div class="v bar"><button aria-label="三視圖"><svg><use href="#l14"/></svg></button></div>
      <i class="hsep"></i>
      <div class="v"><button aria-label="尋找特徵"><svg><use href="#l15"/></svg></button><button class="dd" aria-label="更多特徵"></button></div>
      <div class="v"><button aria-label="基本實體"><svg><use href="#l16"/></svg></button><button class="dd" aria-label="更多基本實體"></button></div>
    </div>
  </aside>

  <section class="panel">
    <div class="phead"><span class="ptitle">操作管理員 (總經銷:欣昊 www.mastercam.com.tw)</span><button class="btn pb" aria-label="選單"><span class="tri"></span></button><button class="btn pb">X</button></div>
    <div class="tabs"><button class="tab on">刀具路徑</button><button class="tab">實體</button></div>
    <div class="pbody">
      <div class="ptool"><button aria-label="全選"><svg><use href="#p1"/></svg></button><button aria-label="取消全選"><svg><use href="#p2"/></svg></button><i class="sep"></i><button aria-label="重新計算"><svg><use href="#p3"/></svg></button><button aria-label="重新計算無效"><svg><use href="#p4"/></svg></button><i class="sep"></i><button aria-label="模擬"><svg><use href="#p5"/></svg></button><button aria-label="實體切削驗證"><svg><use href="#p6"/></svg></button><button class="g1">G1</button><button aria-label="高速進給"><svg><use href="#p7"/></svg></button><i class="sep"></i><button aria-label="刪除操作"><svg><use href="#p8"/></svg></button><i class="sep"></i><button class="last" aria-label="操作說明"><svg><use href="#p9"/></svg></button></div>
      <div class="ptool"><button aria-label="鎖定"><svg><use href="#q1"/></svg></button><button aria-label="顯示刀具路徑"><svg><use href="#q2"/></svg></button><button aria-label="鎖定後處理"><svg><use href="#q3"/></svg></button><i class="sep"></i><button aria-label="下移"><svg><use href="#q4"/></svg></button><button aria-label="上移"><svg><use href="#q5"/></svg></button><button aria-label="插入箭頭"><svg><use href="#q6"/></svg></button><button aria-label="捲動"><svg><use href="#q7"/></svg></button><i class="sep"></i><button aria-label="單一顯示"><svg><use href="#q8"/></svg></button><button aria-label="關聯圖形"><svg><use href="#q9"/></svg></button></div>
      <div class="tree">
        <div class="node"><span class="tog">−</span><i class="dots"></i><svg class="i16"><use href="#grp"/></svg><span class="lbl sel">機器群組-1</span></div>
        <div class="node kid"><span class="tog">+</span><i class="dots"></i><svg class="i16"><use href="#prop"/></svg><span class="lbl">屬性 - Mill Default MM</span></div>
        <div class="node kid"><i class="elbow"></i><svg class="i16"><use href="#flag"/></svg></div>
      </div>
    </div>
  </section>

  <section class="canvas">
    <i class="ax up"></i><i class="ax down"></i><i class="ax lft"></i><i class="ax rgt"></i>
    <div class="gnomon"><span class="gy">Y</span><div class="gl"><i></i><span>X</span></div></div>
    <div class="views"><span>Gview:TOP</span><span>WCS:TOP</span><span>T/Cplane:TOP</span></div>
    <div class="scale"><span class="num">4.731</span><i class="rule"></i><span class="unit">Metric</span></div>
  </section>

  <aside class="right">
    <div class="rtop"></div>
    <div class="rbar">
      <button aria-label="最近曲面"><svg><use href="#r1"/></svg></button><button aria-label="最近點"><svg><use href="#r2"/></svg></button><button aria-label="最近線"><svg><use href="#r3"/></svg></button><button aria-label="最近圓弧"><svg><use href="#r4"/></svg></button><button aria-label="最近曲線"><svg><use href="#r5"/></svg></button><button aria-label="最近網格"><svg><use href="#r6"/></svg></button><button aria-label="最近實體"><svg><use href="#r7"/></svg></button><button aria-label="全部圖素"><svg><use href="#r8"/></svg></button><button aria-label="取消"><svg><use href="#no"/></svg></button><i class="hsep"></i><button aria-label="群組"><svg><use href="#r9"/></svg></button><button aria-label="結果"><svg><use href="#r10"/></svg></button><i class="hsep"></i><button aria-label="顏色"><svg><use href="#r11"/></svg></button><button aria-label="圖層"><svg><use href="#r12"/></svg></button>
    </div>
  </aside>
</main>

<footer class="status">
  <span class="hint">線上求助, 按 Alt+H.</span>
  <div class="cell"><button class="btn w3d">3D</button></div>
  <div class="cell"><button class="btn wview">螢幕視角</button></div>
  <div class="cell"><button class="btn wplane">平面</button></div>
  <div class="cell"><label class="btn zl" for="zd">Z</label><div class="zbox"><button class="yz" id="zd"><mark>0.0</mark></button><span class="tri"></span></div></div>
  <div class="cell"><button class="color">10</button><button class="btn cdd" aria-label="選擇顏色"><span class="tri tall"></span></button></div>
  <div class="cell"><label class="btn lv" for="lvl">Level</label><div class="selwrap slv"><select id="lvl"><option>1</option></select><span class="tri"></span></div></div>
  <div class="cell"><button class="btn wattr">屬性</button></div>
  <div class="cell"><div class="selwrap sp"><select aria-label="點型式"><option>＊</option></select><span class="tri"></span></div></div>
  <div class="cell"><button class="ln lnA" aria-label="線寬"><i class="thick"></i><span class="tri"></span></button></div>
  <div class="cell"><button class="ln lnB" aria-label="線型"><i></i><span class="tri"></span></button></div>
  <div class="cell"><button class="btn wwcs">WCS</button></div>
  <div class="cell"><button class="btn wgrp">群組</button></div>
  <div class="cell"><button class="btn w1">!</button></div>
  <button class="btn w1 cut">?</button>
</footer>

<footer class="taskbar">
  <button class="orb" aria-label="開始"><svg viewBox="0 0 38 38"><circle cx="19" cy="19" r="18" fill="url(#gOrb)" stroke="#0d2f52"/><path d="M10 12c3-2 5-2 8 0l-2 7c-3-2-5-2-8 0z" fill="#ee5a24"/><path d="M19 12c3 2 5 2 9 0l-2 7c-4 2-6 2-9 0z" fill="#8cc63e"/><path d="M8 21c3-2 5-2 8 0l-2 7c-3-2-5-2-8 0z" fill="#3aa0e4"/><path d="M17 21c3 2 5 2 8 0l-2 7c-3 2-5 2-8 0z" fill="#ffd030"/><path d="M3 15C6 2 32 2 35 15c-9 3-23 3-32 0z" fill="#fff" opacity=".28"/></svg></button>
  <button class="task ie" aria-label="Internet Explorer"><svg viewBox="0 0 32 32"><path d="M26 22C21 30 8 27 8 17S24 4 26 15v3H9" stroke="#6fcaf4" stroke-width="5.500"/><path d="M3 29C-3 20 22-3 29 3c2 2 1 5-1 8" stroke="#f2c82c" stroke-width="2.800"/></svg></button>
  <i class="tsep"></i>
  <button class="media" aria-label="Media Player"><svg viewBox="0 0 28 26"><path d="M2 1h19v24H2z" fill="#7db4d8"/><path d="M22 2v22M25 3v20" stroke="#a8d0ea" stroke-width="1.600"/><circle cx="12" cy="13" r="9" fill="#f07c1e" stroke="#ffd0a0"/><path d="M9 7l8 6-8 6z" fill="#fff"/></svg></button>
  <button class="task x" aria-label="Mastercam X2"><svg viewBox="0 0 32 32"><use href="#xbig"/></svg><b>2</b></button>
  <button class="task x on" aria-label="Mastercam X5"><svg viewBox="0 0 32 32"><use href="#xbig"/></svg><b class="red">5</b></button>
  <div class="tray">
    <svg viewBox="0 0 124 18"><path d="M2 7h14v8H2zM2 9h14M2 12h14M5 7v7M9 7v7M13 7v7M6 6c0-5 6 0 8-5" stroke="#b8c4d0" fill="none"/><path d="M34 12l4-4 4 4z" fill="#fff"/><path d="M54 5h10v8H54z" fill="#fff"/><path d="M56 2v3M60 2v3M62 8v8" stroke="#fff" stroke-width="2"/><path d="M81 15v-2M84 15v-4M87 15V9M90 15V6M93 15V3" stroke="#fff" stroke-width="2"/><path d="M105 7h3l4-4v13l-4-4h-3zM114 6c3 2 3 5 0 7" fill="#fff" stroke="#fff"/></svg>
    <div class="clock"><span>下午 09:56</span><span>2012/10/9</span></div>
    <div class="wm">三维网www.3dportal.cn</div>
  </div>
  <button class="peek" aria-label="顯示桌面"></button>
</footer>
</body>
</html>
```
FILE: styles.css
```css
* { box-sizing: border-box; }
html, body { height: 100%; }
body {
  margin: 0; display: flex; flex-direction: column; overflow: hidden; background: #f0f0f0; color: #111;
  font: 12px/16px "Open Sans", "Noto Sans CJK TC", sans-serif;
}
button, input, select { font: inherit; color: inherit; margin: 0; padding: 0; border: 0; background: none; border-radius: 0; }
svg { fill: none; display: block; flex: none; }
.sprite { position: absolute; width: 0; height: 0; }
.i16 { width: 16px; height: 16px; }

.titlebar {
  flex: none; height: 22px; display: flex; align-items: center; gap: 4px; padding-left: 1px; border-bottom: 1px solid #1c2f58;
  background: linear-gradient(90deg, #93abd6 0, #8fa8d4 380px, #3a5d9e 430px, #3b5fa6 50%, #4a70b6 58%, #3c60a6 66%, #4c71b5 78%, #3d62a8 100%);
}
.titletext { flex: 1; margin: 0; font-size: 12px; font-weight: 400; line-height: 20px; white-space: nowrap; color: #14141c; }
.winbtns { display: flex; align-self: flex-start; height: 18px; border: 1px solid #26365c; border-top: 0; border-radius: 0 0 5px 5px; overflow: hidden; margin-right: 3px; box-shadow: 0 0 0 1px #a9badb; }
.wb { width: 28px; display: grid; place-items: center; background: linear-gradient(#9fb2d6, #4b6599 50%, #7d93c0); border-right: 1px solid #26365c; }
.wb svg { width: 16px; height: 14px; }
.wb.close { width: 47px; border: 0; background: linear-gradient(#d99086, #b32d1c 50%, #d0573c); }

.menu { flex: none; height: 20px; display: flex; gap: 14px; padding: 0 8px; border-bottom: 1px solid #b8bdca; background: linear-gradient(#fcfdff, #e8ecf6 45%, #d3d9ea 55%, #dfe4f1); }
.menu button { line-height: 16px; white-space: nowrap; }

.row { flex: none; height: 30px; display: flex; border-top: 1px solid #8f929a; background: linear-gradient(#fff, #d3daed 9px); overflow: hidden; }
.grp { flex: none; display: flex; align-items: center; padding: 0 4px 0 10px; border-right: 1px solid #8f929a; background: radial-gradient(circle, #b4b7bf 1px, transparent 1px) 0 5px / 8px 5px repeat-y, linear-gradient(90deg, #f0f0f0 90%, #dde2f0); }
.grp.first { background: #f0f0f0; }
.grp.tail { width: 342px; border-right: 0; padding-right: 0; overflow: hidden; }
.grp > button:not(.dd), .ptool > button, .v > button:not(.dd), .rbar > button { flex: none; width: 23px; height: 22px; display: grid; place-items: center; }
.grp svg, .ptool svg, .v svg, .rbar svg, .ib svg { width: 16px; height: 16px; }
.dd { flex: none; width: 15px; height: 22px; display: grid; place-items: center; }
.dd::after, .tri { content: ""; flex: none; border: 4px solid transparent; border-top-color: #222; border-bottom: 0; }
.dd.off::after, .tri.off { border-top-color: #999; }
.tri { pointer-events: none; }
.tri.tall { border-width: 8px 5px 0; }
.sep { flex: none; width: 8px; height: 18px; background: linear-gradient(#888, #888) 3px 0 / 1px 100% no-repeat; }

.btn { display: inline-flex; align-items: center; justify-content: center; border: 1px solid #8f8f8f; border-radius: 3px; background: linear-gradient(#fafafa, #ececec 50%, #dcdcdc); white-space: nowrap; }
.yel { flex: none; display: flex; align-items: center; background: #ffffcc; border-right: 1px solid #aaa; }
.coord { width: 455px; padding-left: 6px; }
.key { width: 21px; height: 21px; margin-right: 5px; background: #f6f6f2; }
.combo { width: 72px; height: 21px; margin-right: 13px; padding: 0 4px 0 3px; display: flex; align-items: center; border: 1px solid #b4b4b4; border-radius: 2px; background: #fff; }
.combo input { flex: 1; min-width: 0; width: 50px; height: 15px; font: 11px/15px "Liberation Sans", Arial, sans-serif; background: #f0f0f0; margin-right: 5px; outline: 0; }
.cluster { display: flex; gap: 3px; }
.coord .cluster { margin: 0 5px 0 -6px; }
.ib { width: 21px; height: 21px; display: flex; align-items: center; justify-content: center; background: #efefef; border-right: 1px solid #bbb; border-bottom: 1px solid #bbb; }
.ib.wide { width: 35px; gap: 4px; }
.ib.ants { width: 35px; gap: 9px; border-color: #efefef; }
.sq { width: 22px; height: 22px; background: #e4e4e4; border-color: #777; }
svg.big, .ib svg.big { width: 20px; height: 20px; }
.sq svg.big { width: 18px; height: 18px; }
.pick { flex: 1; padding: 0 10px 0 9px; justify-content: space-between; }
.txt { width: 45px; height: 22px; border-color: #777; }
.selwrap { position: relative; display: flex; }
.selwrap select { width: 100%; appearance: none; outline: 0; padding-left: 3px; }
.selwrap .tri { position: absolute; right: 4px; top: 9px; }
.inwin { width: 73px; height: 22px; }
.inwin select { border-color: #777; }

.ribbon { flex: none; height: 34px; padding-left: 187px; line-height: 31px; border-top: 2px solid #9a9a9a; border-bottom: 1px solid #8d8d8d; }

.main { flex: 1; min-height: 0; display: flex; }
.left { flex: none; width: 44px; background: #d5dcee; border-right: 1px solid #9aa0ae; }
.lbar { padding: 12px 4px 3px 2px; border-right: 3px solid #d8dff0; border-bottom: 1px solid #8f929a; background: #f0f0f0; }
.v { display: flex; }
.v.bar { background: linear-gradient(#888, #888) 26px 2px / 1px 18px no-repeat; }
.hsep { display: block; height: 8px; background: linear-gradient(#888, #888) 3px 3px / 34px 1px no-repeat; }

.panel { flex: none; width: 300px; display: flex; flex-direction: column; border-right: 3px solid #8d9096; background: #f0f0f0; }
.phead { display: flex; align-items: center; height: 18px; padding: 0 4px; gap: 5px; background: #b2b2b2; }
.ptitle { flex: 1; font: 11px/16px "Liberation Serif", "Noto Sans CJK TC", serif; white-space: nowrap; }
.pb { width: 16px; height: 16px; border-radius: 2px; font: 12px/14px "Liberation Serif", serif; }
.tabs { display: flex; align-items: flex-end; height: 22px; padding-left: 1px; border-bottom: 1px solid #8a8a8a; }
.tab { height: 18px; width: 38px; border: 1px solid #8a8a8a; border-bottom: 0; background: linear-gradient(#f8f8f8, #d8d8d8); line-height: 17px; }
.tab.on { width: 62px; height: 21px; margin-bottom: -1px; background: #fff; border-color: #ccc; }
.pbody { flex: 1; display: flex; flex-direction: column; padding: 2px 4px 4px 5px; }
.ptool { height: 30px; display: flex; align-items: center; padding-left: 3px; margin-right: 10px; border-top: 1px solid #a0a0a0; }
.ptool .last { width: 21px; border-right: 1px solid #999; height: 18px; }
.g1 { font: bold 13px/16px "Liberation Serif", serif; color: #9c9c9c; }
.tree { flex: 1; margin-top: 7px; padding-top: 1px; border: 1px solid #777; background: #fff; }
.node { display: flex; align-items: center; height: 16px; padding-left: 8px; }
.kid { padding-left: 27px; }
.tog { width: 9px; height: 9px; border: 1px solid #999; font: 9px/7px "Liberation Sans", sans-serif; text-align: center; color: #246; }
.dots { width: 6px; border-top: 1px dotted #444; }
.elbow { width: 12px; height: 8px; margin: 0 0 8px 4px; border-left: 1px dotted #444; border-bottom: 1px dotted #444; }
.kid .elbow + svg { margin-left: -1px; }
.lbl { margin-left: 4px; padding: 0 1px; font: 12px/16px "Liberation Serif", "Noto Sans CJK TC", serif; white-space: nowrap; }
.sel { background: #3c97ee; color: #fff; }

.canvas { position: relative; flex: 1; background: #000; color: #d4d4d4; overflow: hidden; }
.ax { position: absolute; background: #8a4826; }
.up { left: calc(50% - 1px); top: 0; height: 50%; width: 2px; background: #84501e; }
.down { left: calc(50% - 1px); top: 50%; bottom: 0; width: 1px; }
.lft { left: 0; width: 50%; top: 50%; height: 1px; }
.rgt { left: 50%; right: 0; top: 50%; height: 2px; }
.gnomon { position: absolute; left: 36px; bottom: 32px; font: 11px/16px "DejaVu Sans", sans-serif; color: #4fc84f; }
.gy { display: block; }
.gl { display: flex; align-items: flex-end; gap: 6px; color: #e02c2c; }
.gl i { width: 20px; height: 20px; margin: 3px 0 7px 4px; border-left: 1px solid #4fc84f; border-bottom: 1px solid #b02020; }
.views { position: absolute; left: 6px; bottom: 8px; display: flex; gap: 9px; font: 11px/16px "DejaVu Sans", sans-serif; }
.scale { position: absolute; right: 23px; bottom: 9px; width: 97px; text-align: center; font: 11px/15px "DejaVu Sans", sans-serif; display: flex; flex-direction: column; align-items: center; }
.num { color: #4fd04f; margin-right: 12px; }
.unit { margin-right: 10px; }
.rule { width: 100%; height: 25px; margin: -12px 0; border: 1px solid #e8e88a; border-width: 0 1px; background: linear-gradient(#e8e88a, #e8e88a) 0 12px / 100% 1px no-repeat; }

.right { flex: none; width: 31px; overflow: hidden; border-left: 2px solid #dfe3ee; background: #d5dcee; display: flex; flex-direction: column; }
.rtop { flex: none; height: 235px; border-bottom: 1px solid #8f929a; background: linear-gradient(90deg, #f0f0f0 75%, #d8dff0 85%); }
.rbar { flex: 1; min-height: 0; overflow: hidden; padding: 11px 4px 0 2px; background: linear-gradient(90deg, #f0f0f0 85%, #d8dff0); }
.rbar .hsep { background: linear-gradient(#888, #888) 2px 3px / 20px 1px no-repeat; }

.status { flex: none; height: 28px; display: flex; align-items: center; overflow: hidden; border-top: 2px solid #999; background: #f0eeed; }
.hint { flex: 1; padding-left: 2px; }
.cell { display: flex; align-items: center; height: 24px; padding-right: 2px; margin-right: 2px; border-right: 1px solid #ccc; }
.status .btn { flex: none; height: 20px; border-color: #b0b0b0; border-radius: 2px; overflow: hidden; }
.w3d { width: 25px; }
.wview { width: 57px; }
.wplane { width: 28px; }
.wattr { width: 32px; }
.wwcs { width: 42px; }
.wgrp { width: 39px; }
.status .w1 { width: 14px; }
.status .cut { margin-right: -4px; }
.zl { width: 13px; }
.zbox { width: 91px; height: 24px; padding: 0 3px; background: #fff; display: flex; align-items: center; justify-content: space-between; }
.yz { width: 69px; background: #ffff80; line-height: 16px; text-align: left; }
.yz mark { background: #3c97ee; color: #fff; }
.color { width: 33px; height: 19px; background: #0f0; color: #063; }
.status .cdd { width: 15px; }
.lv { width: 35px; }
.slv, .sp, .ln { height: 24px; background: #fff; }
.slv { width: 80px; }
.sp { width: 38px; }
.status .selwrap .tri { top: 11px; }
.ln { display: flex; align-items: center; justify-content: space-between; padding: 0 4px 0 2px; }
.ln i { height: 1px; background: #000; flex: 1; margin-right: 8px; }
.ln .thick { height: 3px; }
.lnA { width: 63px; }
.lnB { width: 69px; }

.taskbar { flex: none; height: 39px; display: flex; align-items: stretch; border-top: 1px solid #6d93bd; background: linear-gradient(90deg, #1f4d80 0, #27619f 120px, #3174b4 330px, #3a80c0 55%, #2f6faf 70%, #2f6eae 80%, #25527f 85%, #1f4873 100%); }
.orb { width: 60px; padding-left: 7px; }
.orb svg { width: 38px; height: 38px; }
.task { display: flex; align-items: center; justify-content: center; border: 1px solid #c3d8ec; border-radius: 3px; background: linear-gradient(135deg, #9dbfdd, #4a82b6 60%, #6d9ccb); }
.ie { width: 51px; border-left: 2px solid #46e870; }
.task svg { width: 32px; height: 32px; }
.tsep { width: 6px; margin-left: 2px; border: 1px solid #7ba5cc; border-width: 0 1px; }
.media { width: 65px; padding-left: 18px; }
.media svg { width: 28px; height: 26px; }
.x { width: 59px; margin-right: 3px; }
.x svg { width: 28px; height: 30px; }
.x b { font: bold 17px/20px "DejaVu Sans", sans-serif; color: #e4e8ec; text-shadow: 0 0 2px #222; margin: 0 0 6px -7px; }
.x .red { color: #b82a32; font-size: 22px; margin-bottom: 14px; text-shadow: 0 0 1px #400; }
.on { background: linear-gradient(135deg, #e4eef6, #8db4d8 60%, #b9d2ea); border-color: #fff; }
.tray { position: relative; flex: 1; display: flex; justify-content: flex-end; align-items: flex-start; gap: 11px; padding-right: 12px; color: #fff; }
.tray > svg { width: 124px; height: 18px; margin-top: 9px; }
.clock { display: flex; flex-direction: column; align-items: center; line-height: 19px; padding-top: 1px; white-space: nowrap; }
.wm { position: absolute; right: 5px; bottom: 3px; font: 16px/18px "DejaVu Sans", "Noto Sans CJK SC", sans-serif; color: #fff; -webkit-text-stroke: 3px #e83a3a; paint-order: stroke fill; white-space: nowrap; }
.peek { width: 15px; border: 1px solid #8aa9c8; background: linear-gradient(135deg, #5d88b0, #1f4a78); }
```
